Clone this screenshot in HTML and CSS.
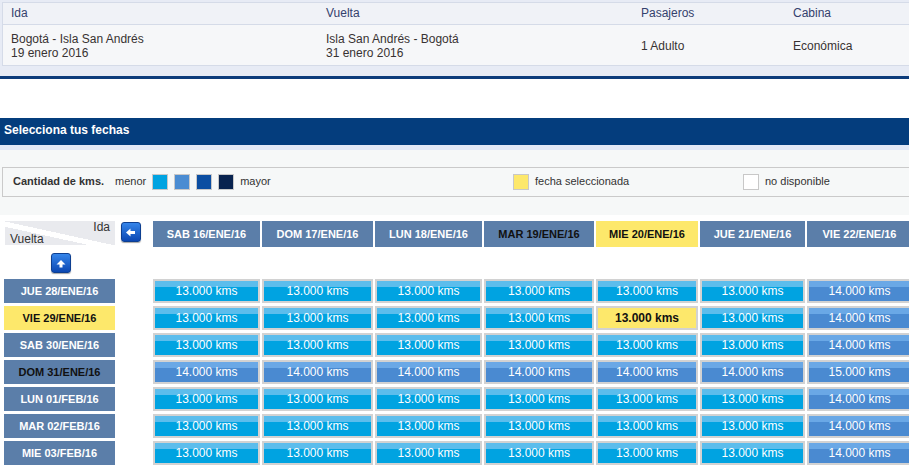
FILE: index.html
```html
<!DOCTYPE html>
<html lang="es">
<head>
    <meta charset="UTF-8">
    <meta name="viewport" content="width=device-width, initial-scale=1.0">
    <title>Selecciona tus fechas</title>
    <link rel="stylesheet" href="styles.css">
</head>
<body>
<div class="page">
    <div class="summary">
        <table class="trip">
            <colgroup>
                <col class="trip-route">
                <col class="trip-route">
                <col class="trip-pax">
                <col class="trip-cabin">
            </colgroup>
            <thead>
                <tr>
                    <th>Ida</th>
                    <th>Vuelta</th>
                    <th>Pasajeros</th>
                    <th>Cabina</th>
                </tr>
            </thead>
            <tbody>
                <tr>
                    <td>Bogotá - Isla San Andrés<br>19 enero 2016</td>
                    <td>Isla San Andrés - Bogotá<br>31 enero 2016</td>
                    <td>1 Adulto</td>
                    <td>Económica</td>
                </tr>
            </tbody>
        </table>
    </div>
    <div class="rule"></div>

    <h2 class="section-title">Selecciona tus fechas</h2>

    <div class="filters">
        <div class="legend">
            <div class="legend-item">
                <span class="legend-label">Cantidad de kms.</span>
                <span class="legend-text">menor</span>
                <span class="swatch tier-1"></span>
                <span class="swatch tier-2"></span>
                <span class="swatch tier-3"></span>
                <span class="swatch tier-4"></span>
                <span class="legend-text">mayor</span>
            </div>
            <div class="legend-item">
                <span class="swatch picked"></span>
                <span class="legend-text">fecha seleccionada</span>
            </div>
            <div class="legend-item">
                <span class="swatch empty"></span>
                <span class="legend-text">no disponible</span>
            </div>
        </div>
    </div>

    <div class="calendar">
        <table class="matrix">
            <colgroup>
                <col class="c-label">
                <col class="c-nav">
                <col class="c-107">
                <col class="c-111">
                <col class="c-107">
                <col class="c-110">
                <col class="c-102">
                <col class="c-105">
                <col class="c-105">
            </colgroup>
            <thead>
                <tr>
                    <td class="corner">
                        <div class="corner-box">
                            <span class="corner-ida">Ida</span>
                            <span class="corner-vuelta">Vuelta</span>
                        </div>
                    </td>
                    <td class="nav-cell">
                        <button class="nav-btn" type="button" title="Anterior">
                            <svg viewBox="0 0 18 18" width="18" height="18"><polygon points="4,9.5 8.5,5.5 8.5,8 13,8 13,11 8.5,11 8.5,13.5" fill="#fff"/></svg>
                        </button>
                    </td>
                    <th class="day">SAB 16/ENE/16</th>
                    <th class="day">DOM 17/ENE/16</th>
                    <th class="day">LUN 18/ENE/16</th>
                    <th class="day marked">MAR 19/ENE/16</th>
                    <th class="day selected">MIE 20/ENE/16</th>
                    <th class="day">JUE 21/ENE/16</th>
                    <th class="day">VIE 22/ENE/16</th>
                </tr>
                <tr>
                    <td class="up-cell">
                        <button class="nav-btn" type="button" title="Anterior">
                            <svg viewBox="0 0 18 18" width="18" height="18"><polygon points="9,6 13.5,10.5 10.5,10.5 10.5,13.5 7.5,13.5 7.5,10.5 4.5,10.5" fill="#fff"/></svg>
                        </button>
                    </td>
                    <td colspan="8"></td>
                </tr>
            </thead>
            <tbody>
                <tr>
                    <th class="day">JUE 28/ENE/16</th>
                    <td></td>
                    <td class="kms">13.000 kms</td>
                    <td class="kms">13.000 kms</td>
                    <td class="kms">13.000 kms</td>
                    <td class="kms">13.000 kms</td>
                    <td class="kms">13.000 kms</td>
                    <td class="kms">13.000 kms</td>
                    <td class="kms tier-2">14.000 kms</td>
                </tr>
                <tr>
                    <th class="day selected">VIE 29/ENE/16</th>
                    <td></td>
                    <td class="kms">13.000 kms</td>
                    <td class="kms">13.000 kms</td>
                    <td class="kms">13.000 kms</td>
                    <td class="kms">13.000 kms</td>
                    <td class="kms selected">13.000 kms</td>
                    <td class="kms">13.000 kms</td>
                    <td class="kms tier-2">14.000 kms</td>
                </tr>
                <tr>
                    <th class="day">SAB 30/ENE/16</th>
                    <td></td>
                    <td class="kms">13.000 kms</td>
                    <td class="kms">13.000 kms</td>
                    <td class="kms">13.000 kms</td>
                    <td class="kms">13.000 kms</td>
                    <td class="kms">13.000 kms</td>
                    <td class="kms">13.000 kms</td>
                    <td class="kms tier-2">14.000 kms</td>
                </tr>
                <tr>
                    <th class="day marked">DOM 31/ENE/16</th>
                    <td></td>
                    <td class="kms tier-2">14.000 kms</td>
                    <td class="kms tier-2">14.000 kms</td>
                    <td class="kms tier-2">14.000 kms</td>
                    <td class="kms tier-2">14.000 kms</td>
                    <td class="kms tier-2">14.000 kms</td>
                    <td class="kms tier-2">14.000 kms</td>
                    <td class="kms tier-2">15.000 kms</td>
                </tr>
                <tr>
                    <th class="day">LUN 01/FEB/16</th>
                    <td></td>
                    <td class="kms">13.000 kms</td>
                    <td class="kms">13.000 kms</td>
                    <td class="kms">13.000 kms</td>
                    <td class="kms">13.000 kms</td>
                    <td class="kms">13.000 kms</td>
                    <td class="kms">13.000 kms</td>
                    <td class="kms tier-2">14.000 kms</td>
                </tr>
                <tr>
                    <th class="day">MAR 02/FEB/16</th>
                    <td></td>
                    <td class="kms">13.000 kms</td>
                    <td class="kms">13.000 kms</td>
                    <td class="kms">13.000 kms</td>
                    <td class="kms">13.000 kms</td>
                    <td class="kms">13.000 kms</td>
                    <td class="kms">13.000 kms</td>
                    <td class="kms tier-2">14.000 kms</td>
                </tr>
                <tr>
                    <th class="day">MIE 03/FEB/16</th>
                    <td></td>
                    <td class="kms">13.000 kms</td>
                    <td class="kms">13.000 kms</td>
                    <td class="kms">13.000 kms</td>
                    <td class="kms">13.000 kms</td>
                    <td class="kms">13.000 kms</td>
                    <td class="kms">13.000 kms</td>
                    <td class="kms tier-2">14.000 kms</td>
                </tr>
            </tbody>
        </table>
    </div>
</div>
</body>
</html>
```

FILE: styles.css
```css
/* selector de fechas - kms */
body {
    margin: 0;
    font-family: "Liberation Sans", Arial, sans-serif;
    color: #333;
    background: #fff;
    overflow: hidden;
}

.page {
    width: 916px;
}

/* resumen del viaje */
.summary {
    background: #e7ebf5;
    padding: 2px 0 10px 2px;
}

.trip {
    width: 914px;
    table-layout: fixed;
    border-collapse: separate;
    border-spacing: 0;
    border: 1px solid #d5dbe8;
    border-right: 0;
    font-size: 12px;
}

.trip-route { width: 315px; }
.trip-pax { width: 152px; }

.trip th {
    text-align: left;
    font-weight: normal;
    color: #34416d;
    background: #f0f2f7;
    line-height: 15px;
    padding: 3px 8px;
    border-bottom: 1px solid #d5dbe8;
}

.trip td {
    background: #f6f7f9;
    line-height: 14px;
    padding: 7px 8px 5px;
    color: #383232;
}

.rule {
    height: 3px;
    background: #0c3b7b;
    margin-bottom: 39px;
}

.section-title {
    margin: 0;
    padding: 0 0 3px 4px;
    line-height: 24px;
    font-size: 12px;
    font-weight: bold;
    color: #fff;
    background: #043d7d;
    border-bottom: 5px solid #e3e9f6;
}

/* leyenda */
.filters {
    background: #f6f8f8;
    padding: 17px 0 18px 2px;
}

.legend {
    display: grid;
    grid-template-columns: 500px 230px 1fr;
    align-items: center;
    height: 28px;
    padding-left: 10px;
    border: 1px solid #cacaca;
    border-right: 0;
    font-size: 11px;
    color: #333;
}

.legend-item {
    display: flex;
    align-items: center;
    gap: 6px;
    white-space: nowrap;
}

.legend-label {
    flex: none;
    width: 96px;
    font-weight: bold;
}

.legend-label,
.legend-text {
    padding-bottom: 3px;
}

.swatch {
    flex: none;
    width: 16px;
    height: 16px;
    box-sizing: border-box;
    border: 1px solid #c8c8c8;
}

.swatch.tier-1 { background: #00a3e1; }
.swatch.tier-2 { background: #4a8cd2; }
.swatch.tier-3 { background: #0b4ea2; }
.swatch.tier-4 { background: #08234f; }
.swatch.picked { background: #fde86b; }
.swatch.empty { background: #fff; }

/* matriz ida / vuelta */
.calendar {
    background: #fff;
    padding-top: 3px;
}

.matrix {
    width: 912px;
    table-layout: fixed;
    border-collapse: separate;
    border-spacing: 2px 3px;
    margin-left: 2px;
}

.c-label { width: 111px; }
.c-nav { width: 34px; }
.c-107 { width: 107px; }
.c-111 { width: 111px; }
.c-110 { width: 110px; }
.c-102 { width: 102px; }
.c-105 { width: 105px; }

.matrix td,
.matrix th {
    padding: 0;
}

.corner {
    vertical-align: top;
}

.corner-box {
    display: flex;
    flex-direction: column;
    justify-content: space-between;
    height: 24px;
    margin-left: 1px;
    padding: 0 5px;
    font-size: 12px;
    line-height: 12px;
    color: #333;
    background: linear-gradient(to top right, #e9eaee 38%, #fff 38%, #fff 49%, #e9eaee 49%);
}

.corner-ida {
    align-self: flex-end;
}

.nav-cell {
    vertical-align: top;
}

.matrix .nav-cell {
    padding: 1px 0 0 4px;
}

.matrix .up-cell {
    padding: 3px 0 3px 47px;
}

.nav-btn {
    display: block;
    width: 20px;
    height: 20px;
    padding: 0;
    border: 1px solid #0d3f91;
    border-radius: 3px;
    background: linear-gradient(#3585ea, #0b47b2);
    box-shadow: 0 1px 1px rgba(0, 0, 0, 0.35);
    cursor: pointer;
}

.nav-btn svg {
    display: block;
}

.day {
    background: #5b7ea9;
    color: #fff;
    font-size: 11px;
    font-weight: bold;
    text-align: center;
    white-space: nowrap;
    line-height: 26px;
}

tbody .day {
    line-height: 24px;
}

.day.marked {
    color: #111;
}

.day.selected {
    background: #fde86b;
    color: #111;
}

.kms {
    border: 2px solid #d2d2d2;
    line-height: 20px;
    text-align: center;
    font-size: 12px;
    color: #fff;
    white-space: nowrap;
    background: linear-gradient(#5cbdec 0, #5cbdec 6px, #00a3e1 6px);
}

.kms.tier-2 {
    background: linear-gradient(#6aa8e6 0, #6aa8e6 6px, #4a8ad1 6px);
}

.kms.selected {
    background: #fde86b;
    color: #111;
    font-weight: bold;
}
```
